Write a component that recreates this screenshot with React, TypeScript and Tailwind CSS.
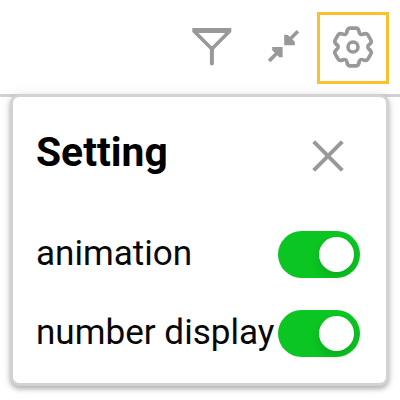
const LOBES = [0, 60, 120, 180, 240, 300];

function FilterIcon() {
  return (
    <svg className="h-10 w-10" viewBox="0 0 40 40" fill="none" stroke="#999">
      <path d="M0.3 1H39.3V4.2L38.2 6H1.4L0.3 4.2Z" fill="#999" stroke="none" />
      <path d="M1.9 4L19.9 22L37.7 4" strokeWidth="3.6" />
      <path d="M19.9 21V36.6" strokeWidth="4" strokeLinecap="round" />
    </svg>
  );
}

function CollapseIcon() {
  return (
    <svg className="h-8 w-8" viewBox="0 0 32 32" fill="none" stroke="#999" strokeWidth="3.6">
      <path d="M29.9 1.3L19 12.2" />
      <path d="M16.2 4.8L19.8 5L26.8 11.8V15.2H16.2Z" fill="#999" stroke="none" />
      <path d="M1.1 31L12 20.1" />
      <path d="M14.6 27.2H11.3L4.2 20.2V17H14.6Z" fill="#999" stroke="none" />
    </svg>
  );
}

function GearIcon() {
  return (
    <svg className="mb-[2px] h-11 w-11" viewBox="-22 -22 44 44" fill="none" stroke="#999" strokeWidth="3.6" strokeLinecap="round">
      {LOBES.map((angle) => (
        <path
          key={angle}
          transform={`rotate(${angle})`}
          d="M-6-15.6C-5.6-17.8-4.8-18.9-3-18.9H3C4.8-18.9 5.6-17.8 6-15.6C6.1-12.9 8.12-11.73 10.51-13"
        />
      ))}
      <circle r="5" />
    </svg>
  );
}

function Toggle() {
  return (
    <button role="switch" aria-checked="true" className="flex h-[47px] w-[82px] shrink-0 items-center justify-end rounded-full bg-[#0bc522] pr-[6px]">
      <span className="size-[35px] rounded-full bg-white shadow-[0_5px_8px_rgba(0,0,0,0.12)]" />
    </button>
  );
}

function SettingRow({ label }: { label: string }) {
  return (
    <div className="flex h-[47px] items-center justify-between">
      <span className="whitespace-nowrap pb-1 text-[35.1px] leading-[44px] text-[#080808]">{label}</span>
      <Toggle />
    </div>
  );
}

export default function App() {
  return (
    <div className="h-[400px] w-[400px] overflow-hidden bg-white font-['Roboto',sans-serif]">
      <header className="flex h-[97px] items-start border-b-[3px] border-[#d2d2d2] pl-[192px] pt-3">
        <div className="mt-[15px]"><FilterIcon /></div>
        <div className="ml-9 mt-[18px]"><CollapseIcon /></div>
        <div className="ml-[17px] flex size-[72px] items-center justify-center border-[3px] border-[#f8c12d]">
          <GearIcon />
        </div>
      </header>
      <section className="-mt-[3px] ml-[10px] h-[292px] w-[379px] rounded-[9px] border-[3px] border-[#d2d2d2] bg-white pl-[23px] pr-[26px] shadow-[0_3px_5px_rgba(0,0,0,0.28),0_0_14px_rgba(0,0,0,0.07)]">
        <div className="flex items-start justify-between pr-[16px] pt-[31px]">
          <h1 className="-mt-px text-[40.8px] font-bold leading-[50px] text-black">Setting</h1>
          <svg className="mt-[12px] h-8 w-8" viewBox="0 0 32 32" stroke="#999" strokeWidth="4">
            <path d="M1.7 1.7L30.3 30.3M30.3 1.7L1.7 30.3" />
          </svg>
        </div>
        <div className="mt-[54px] flex flex-col gap-8">
          <SettingRow label="animation" />
          <SettingRow label="number display" />
        </div>
      </section>
    </div>
  );
}
